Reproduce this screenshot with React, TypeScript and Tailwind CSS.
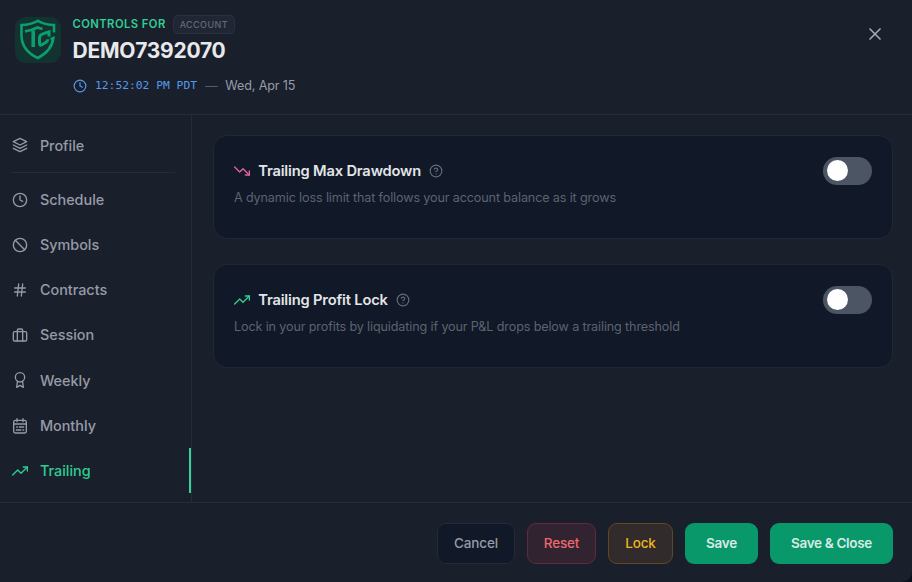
import React from "react";
import { FiLayers, FiClock, FiSlash, FiHash, FiBriefcase, FiAward, FiTrendingUp, FiTrendingDown, FiHelpCircle, FiX } from "react-icons/fi";

const line = { strokeWidth: 2 };

function CalendarRows() {
  return (
    <svg width="16" height="16" viewBox="0 0 24 24" fill="none" stroke="currentColor" strokeWidth="2" strokeLinecap="round" strokeLinejoin="round">
      <rect x="2.500" y="3.500" width="19" height="19" rx="2.500" />
      <path d="M7.500 1v4.500M16.500 1v4.500M2.500 9h19M7 13.500h1M11 13.500h6.500M6.500 18h7M16.500 18h1" />
    </svg>
  );
}

function Logo() {
  return (
    <svg width="46" height="46" viewBox="0 0 46 46" fill="none" stroke="#0b9e6e" strokeLinejoin="miter">
      <path d="M39 15.500V8C33 7.800 27.500 6.400 22.800 3.800C18 6.400 12.500 7.800 6.500 8V18C6.500 28.500 13 36.500 22.800 41C31.500 36.500 37.300 29.500 38.400 21L35.500 22.200" strokeWidth="2.600" />
      <path d="M10 14.300C14.500 13.800 18.500 12.500 22.500 10.500L27.500 12" strokeWidth="2.800" />
      <path d="M18.200 13.500V30" strokeWidth="3.600" />
      <path d="M34 19.500V14.800L27.800 16.900Q24.500 18 24.500 21V26.500Q24.500 29 27 27.700L31 25.300Q32.700 24.200 32.800 22.200" strokeWidth="3" />
    </svg>
  );
}

const items = [
  { label: "Schedule", icon: <FiClock size={16} style={line} /> },
  { label: "Symbols", icon: <FiSlash size={16} style={line} /> },
  { label: "Contracts", icon: <FiHash size={16} style={line} /> },
  { label: "Session", icon: <FiBriefcase size={16} style={line} /> },
  { label: "Weekly", icon: <FiAward size={16} style={line} /> },
  { label: "Monthly", icon: <CalendarRows /> },
];

function NavItem({ icon, label, active = false }: { icon: React.ReactNode; label: string; active?: boolean }) {
  return (
    <div className={"flex h-[45.2px] shrink-0 items-center gap-[12.400px] pl-[11.500px] text-[14.400px] font-medium " + (active ? "border-r-2 border-[#34d399] text-[#2dce92]" : "text-[#969ba7]")}>
      {icon}
      <span>{label}</span>
    </div>
  );
}

function Card({ icon, title, text }: { icon: React.ReactNode; title: string; text: string }) {
  return (
    <div className="flex h-[104px] items-start justify-between rounded-[14px] border border-[#212735] bg-[#111827] px-5 pt-5">
      <div>
        <div className="flex h-[30px] items-center">
          {icon}
          <h3 className="ml-[8.200px] text-[14.700px] font-semibold tracking-[-0.170px] text-[#e3e5e8]">{title}</h3>
          <FiHelpCircle size={14} style={line} className="ml-2 text-[#646b79]" />
        </div>
        <p className="mt-[2px] text-[12.600px] leading-5 tracking-[-0.130px] text-[#5c6371]">{text}</p>
      </div>
      <div className="mt-[0.500px] flex h-[28.500px] w-[49px] items-center rounded-full bg-[#4b5563] pl-[3.500px]">
        <div className="size-[21px] rounded-full bg-white" />
      </div>
    </div>
  );
}

export default function App() {
  return (
    <div className="h-[582px] w-[912px] overflow-hidden bg-[#0c101a] font-['Inter',sans-serif]">
      <div className="flex h-full flex-col overflow-hidden rounded-br-[10px] bg-[#1a1f2c]">
        <header className="flex h-[115px] shrink-0 items-start border-b border-[#262b37] pl-[15px]">
          <div className="mt-[17px] size-[46px] rounded-[11px] bg-[#12332f]">
            <Logo />
          </div>
          <div className="ml-[11.500px] mt-[15px] flex-1">
            <div className="flex h-[19px] items-center gap-[7px]">
              <span className="text-[11.250px] font-semibold tracking-[0.430px] text-[#30cf94]">CONTROLS FOR</span>
              <span className="flex h-[19px] items-center rounded-[5px] border border-[#2b313e] bg-[#202633] px-[6px] text-[9px] font-medium tracking-[0.400px] text-[#626978]">ACCOUNT</span>
            </div>
            <div className="mt-[3px] text-[21px] font-bold leading-[28px] tracking-[-0.250px] text-[#e7e9eb]">DEMO7392070</div>
            <div className="mt-[11px] flex h-5 items-center">
              <FiClock size={14} style={line} className="text-[#559ae9]" />
              <span className="ml-[8.500px] font-['DejaVu_Sans_Mono',monospace] text-[11.300px] text-[#559ae9]">12:52:02 PM PDT</span>
              <span className="ml-2 text-[12.600px] text-[#555c69]">—</span>
              <span className="ml-[7.700px] text-[12.600px] tracking-[-0.130px] text-[#969ba7]">Wed, Apr 15</span>
            </div>
          </div>
          <FiX size={20} style={line} className="mr-[27px] mt-[24px] text-[#a4a8b2]" />
        </header>
        <div className="flex min-h-0 flex-1">
          <aside className="flex w-[192px] shrink-0 flex-col border-r border-[#262b37] pt-[7.900px]">
            <NavItem label="Profile" icon={<FiLayers size={16} style={line} />} />
            <div className="mb-[4px] ml-[11px] mr-[16px] mt-[4px] h-px shrink-0 bg-[#262b37]" />
            {items.map((i) => <NavItem key={i.label} {...i} />)}
            <NavItem active label="Trailing" icon={<FiTrendingUp size={16} style={line} />} />
          </aside>
          <main className="flex flex-1 flex-col gap-[25px] pl-[21px] pr-[19px] pt-[20px]">
            <Card title="Trailing Max Drawdown" text="A dynamic loss limit that follows your account balance as it grows" icon={<FiTrendingDown size={16} style={line} className="text-[#e061a1]" />} />
            <Card title="Trailing Profit Lock" text="Lock in your profits by liquidating if your P&L drops below a trailing threshold" icon={<FiTrendingUp size={16} style={line} className="text-[#2dce92]" />} />
          </main>
        </div>
        <footer className="flex h-[80px] shrink-0 items-start justify-end gap-[12px] border-t border-[#262b37] pr-[19px] pt-[20px] text-[13.500px] font-medium tracking-[-0.170px]">
          <button className="h-[41px] w-[78px] rounded-[9px] border border-[#242a37] bg-[#111827] text-[#969ba7]">Cancel</button>
          <button className="h-[41px] w-[69px] rounded-[9px] border border-[#652a37] bg-[#31232f] text-[#ea6a6e]">Reset</button>
          <button className="h-[41px] w-[65px] rounded-[9px] border border-[#634721] bg-[#322b2b] text-[#edb422]">Lock</button>
          <button className="h-[41px] w-[73px] rounded-[9px] bg-[#08986a] font-semibold tracking-[-0.300px] text-[#d8eae4]">Save</button>
          <button className="h-[41px] w-[123px] rounded-[9px] bg-[#08986a] font-semibold tracking-[-0.330px] text-[#d8eae4]">Save &amp; Close</button>
        </footer>
      </div>
    </div>
  );
}
